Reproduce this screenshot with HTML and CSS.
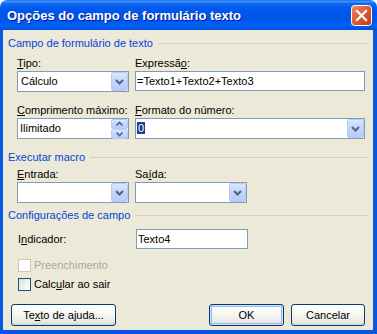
FILE: index.html
```html
<!DOCTYPE html>
<html lang="pt">
<head>
<meta charset="utf-8">
<title>Opções do campo de formulário texto</title>
<link rel="stylesheet" href="styles.css">
</head>
<body>
<div class="window">
  <div class="titlebar">
    <span class="title">Opções do campo de formulário texto</span>
    <span class="close">
      <svg width="21" height="21" viewBox="0 0 21 21">
        <defs>
          <linearGradient id="cg" x1="0" y1="0" x2="1" y2="1">
            <stop offset="0" stop-color="#EE8A6C"/>
            <stop offset="0.5" stop-color="#DD5A36"/>
            <stop offset="1" stop-color="#C23A14"/>
          </linearGradient>
        </defs>
        <rect x="0.5" y="0.5" width="20" height="20" rx="3" fill="url(#cg)" stroke="#fff"/>
        <path d="M6 6 L15 15 M15 6 L6 15" stroke="#fff" stroke-width="2.2" stroke-linecap="square"/>
      </svg>
    </span>
  </div>
  <div class="body">
    <div class="group g1"><span>Campo de formulário de texto</span></div>

    <div class="row r1">
      <div class="col-left">
        <div class="lbl"><u>T</u>ipo:</div>
        <div class="combo"><span class="val">Cálculo</span><span class="drop"><svg width="15" height="17" viewBox="0 0 15 17"><path d="M4 7 L7.5 10.5 L11 7" fill="none" stroke="#4D6185" stroke-width="2"/></svg></span></div>
      </div>
      <div class="col-right">
        <div class="lbl">Expressã<u>o</u>:</div>
        <div class="textbox">=Texto1+Texto2+Texto3</div>
      </div>
    </div>

    <div class="row r2">
      <div class="col-left">
        <div class="lbl"><u>C</u>omprimento máximo:</div>
        <div class="combo spin"><span class="val">Ilimitado</span><span class="spinbtns"><span class="sb"><svg width="15" height="8" viewBox="0 0 15 8"><path d="M4.5 5.5 L7.5 2.5 L10.5 5.5" fill="none" stroke="#4D6185" stroke-width="1.6"/></svg></span><span class="sb"><svg width="15" height="8" viewBox="0 0 15 8"><path d="M4.5 2.5 L7.5 5.5 L10.5 2.5" fill="none" stroke="#4D6185" stroke-width="1.6"/></svg></span></span></div>
      </div>
      <div class="col-right">
        <div class="lbl"><u>F</u>ormato do número:</div>
        <div class="combo"><span class="val"><span class="sel">0</span></span><span class="drop"><svg width="15" height="17" viewBox="0 0 15 17"><path d="M4 7 L7.5 10.5 L11 7" fill="none" stroke="#4D6185" stroke-width="2"/></svg></span></div>
      </div>
    </div>

    <div class="group g2"><span>Executar macro</span></div>

    <div class="row r3">
      <div class="col-left">
        <div class="lbl"><u>E</u>ntrada:</div>
        <div class="combo"><span class="val"></span><span class="drop"><svg width="15" height="17" viewBox="0 0 15 17"><path d="M4 7 L7.5 10.5 L11 7" fill="none" stroke="#4D6185" stroke-width="2"/></svg></span></div>
      </div>
      <div class="col-left">
        <div class="lbl">Sa<u>í</u>da:</div>
        <div class="combo"><span class="val"></span><span class="drop"><svg width="15" height="17" viewBox="0 0 15 17"><path d="M4 7 L7.5 10.5 L11 7" fill="none" stroke="#4D6185" stroke-width="2"/></svg></span></div>
      </div>
    </div>

    <div class="group g3"><span>Configurações de campo</span></div>

    <div class="row r4">
      <div class="col-left lbl-mid">I<u>n</u>dicador:</div>
      <div class="col-left"><div class="textbox">Texto4</div></div>
    </div>

    <div class="check disabled c1"><span class="box"></span><span>Preenchimento</span></div>
    <div class="check c2"><span class="box"></span><span>Calc<u>u</u>lar ao sair</span></div>

    <div class="buttons">
      <span class="btn help">Te<u>x</u>to de ajuda...</span>
      <span class="btn ok">OK</span>
      <span class="btn cancel">Cancelar</span>
    </div>
  </div>
</div>
</body>
</html>
```

FILE: styles.css
```css
html, body {
  margin: 0;
  padding: 0;
  background: #ffffff;
}

body {
  font-family: "Liberation Sans", Arial, sans-serif;
  font-size: 11px;
  color: #000;
}

.window {
  width: 377px;
  height: 334px;
  display: flex;
  flex-direction: column;
}

.titlebar {
  height: 30px;
  flex: none;
  box-sizing: border-box;
  border-radius: 7px 7px 0 0;
  background: linear-gradient(180deg, #0A5EE8 0%, #4A9BFF 4%, #1068F2 12%, #0058EE 30%, #0054E6 60%, #0060F6 86%, #004FD8 100%);
  display: flex;
  align-items: center;
  justify-content: space-between;
  padding: 0 5px 0 7px;
}

.title {
  color: #ffffff;
  font-weight: bold;
  font-size: 13px;
  text-shadow: 1px 1px 0 #0A1A8C;
  letter-spacing: 0;
}

.close {
  width: 21px;
  height: 21px;
  display: block;
  margin-top: 1px;
}

.close svg {
  display: block;
}

.body {
  flex: 1;
  background: #ECE9D8;
  border-style: solid;
  border-color: #0856E6;
  border-width: 0 4px 4px 3px;
  display: flex;
  flex-direction: column;
  padding: 0 6px 0 5px;
}

.group {
  display: flex;
  align-items: center;
  height: 13px;
  line-height: 13px;
  color: #0046D5;
}

.group::after {
  content: "";
  flex: 1;
  height: 1px;
  background: #D0D0BF;
  margin-left: 5px;
}

.g1 { margin-top: 7px; }
.g2 { margin-top: 12px; }
.g3 { margin-top: 6px; }

.row {
  display: flex;
  gap: 6px;
  padding: 0 2px 0 9px;
}

.r1 { margin-top: 7px; }
.r2 { margin-top: 12px; }
.r3 { margin-top: 4px; }
.r4 { margin-top: 7px; align-items: center; }

.col-left {
  width: 112px;
  flex: none;
}

.col-right {
  flex: 1;
}

.lbl {
  height: 13px;
  line-height: 13px;
  margin-bottom: 1px;
  white-space: nowrap;
}

.lbl-mid {
  line-height: 13px;
  padding-left: 1px;
}

.combo {
  height: 21px;
  box-sizing: border-box;
  border: 1px solid #7F9DB9;
  background: #ffffff;
  display: flex;
  align-items: center;
  padding-left: 3px;
}

.combo .val {
  flex: 1;
  line-height: 13px;
}

.spin {
  padding-left: 2px;
}

.sel {
  display: inline-block;
  background: #1B3A8C;
  color: #ffffff;
  line-height: 12px;
  padding: 0 1px;
  margin-left: -2px;
}

.drop {
  width: 17px;
  height: 19px;
  flex: none;
  box-sizing: border-box;
  border: 1px solid #B7CBF5;
  border-radius: 2px;
  background: linear-gradient(180deg, #DCE7FE 0%, #C5D6FC 45%, #B6CBF8 100%);
}

.drop svg {
  display: block;
}

.spinbtns {
  width: 17px;
  height: 19px;
  flex: none;
  display: flex;
  flex-direction: column;
}

.sb {
  flex: 1;
  box-sizing: border-box;
  border: 1px solid #B7CBF5;
  border-radius: 2px;
  background: linear-gradient(180deg, #DCE7FE 0%, #C5D6FC 50%, #B6CBF8 100%);
  display: flex;
  align-items: center;
  justify-content: center;
}

.sb svg {
  display: block;
}

.textbox {
  height: 20px;
  box-sizing: border-box;
  border: 1px solid #7F9DB9;
  background: #ffffff;
  padding-left: 1px;
  line-height: 18px;
  white-space: nowrap;
}

.check {
  display: flex;
  align-items: center;
  gap: 3px;
  height: 13px;
  line-height: 13px;
  padding-left: 10px;
}

.c1 { margin-top: 10px; }
.c2 { margin-top: 6px; }

.check .box {
  width: 13px;
  height: 13px;
  box-sizing: border-box;
  border: 1px solid #1C5180;
  background: linear-gradient(135deg, #DCDCD7 0%, #F0F0EA 50%, #FFFFFF 100%);
  flex: none;
}

.check.disabled .box {
  border-color: #CAC8BB;
  background: #ffffff;
}

.check.disabled {
  color: #ACA899;
}

.buttons {
  display: flex;
  margin-top: 13px;
  padding: 0 2px 0 3px;
  gap: 7px;
}

.btn {
  height: 22px;
  box-sizing: border-box;
  border: 1px solid #003C74;
  border-radius: 3px;
  background: linear-gradient(180deg, #FFFFFF 0%, #F8F8F5 40%, #ECEBE6 80%, #D8D4CA 100%);
  display: flex;
  align-items: center;
  justify-content: center;
  line-height: 13px;
}

.help { width: 105px; }
.ok {
  width: 75px;
  margin-left: auto;
  box-shadow: inset 0 0 0 1px #CEE0FB, inset 0 0 0 2px #9DBAF0;
}
.cancel { width: 74px; }
```
